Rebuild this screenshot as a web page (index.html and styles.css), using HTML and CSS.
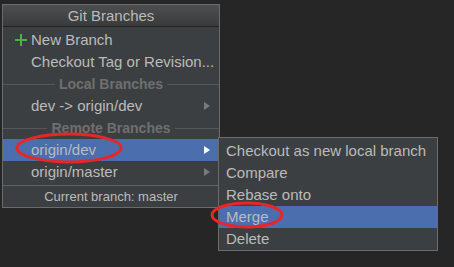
FILE: index.html
```html
<!DOCTYPE html>
<html><head>
<title>Git Branches</title>
<link rel="stylesheet" href="styles.css">
</head><body>

<div class="popup branches">
  <div class="title">Git Branches</div>
  <div class="item"><span class="icon plus"></span>New Branch</div>
  <div class="item">Checkout Tag or Revision...</div>
  <div class="sep"><span>Local Branches</span></div>
  <div class="item sub">dev -&gt; origin/dev</div>
  <div class="sep"><span>Remote Branches</span></div>
  <div class="item sub selected">origin/dev</div>
  <div class="item sub">origin/master</div>
  <div class="footer">Current branch: master</div>
</div>

<div class="popup actions">
  <div class="item">Checkout as new local branch</div>
  <div class="item">Compare</div>
  <div class="item">Rebase onto</div>
  <div class="item selected">Merge</div>
  <div class="item">Delete</div>
</div>

<!-- hand-drawn marks over the screenshot -->
<svg class="marks" width="454" height="267" viewBox="0 0 454 267">
  <ellipse cx="69" cy="148" rx="52" ry="14" />
  <ellipse cx="247" cy="215" rx="35" ry="12" />
</svg>

</body></html>
```

FILE: styles.css
```css
html, body {
  margin: 0;
  padding: 0;
  }
body {
  position: relative;
  width: 454px;
  height: 267px;
  background-color: #262626;
  font-family: "Liberation Sans", Arial, sans-serif;
  font-size: 15px;
  color: #bbbbbb;
  overflow: hidden;
  }
.popup {
  background-color: #3c3f41;
  border: 1px solid #6b6b6b;
  box-sizing: border-box;
  }
.branches {
  margin: 4px 0 0 2px;
  width: 218px;
  height: 204px;
  }
.actions {
  position: absolute;
  left: 218px;
  top: 137px;
  width: 220px;
  height: 114px;
  padding-top: 2px;
  }
.title {
  height: 21px;
  line-height: 21px;
  text-align: center;
  background: linear-gradient(#4c4e50, #3a3b3c);
  border-bottom: 1px solid #232323;
  margin-bottom: 2px;
  }
.item {
  position: relative;
  height: 22px;
  line-height: 22px;
  padding-left: 28px;
  white-space: nowrap;
  }
.actions .item {
  padding-left: 7px;
  }
.item.selected {
  background-color: #4b6eaf;
  }
.sub::after {
  content: "";
  position: absolute;
  right: 9px;
  top: 7px;
  border-style: solid;
  border-width: 4px 0 4px 6px;
  border-color: transparent transparent transparent #7a7a7a;
  }
.sub.selected::after {
  border-left-color: #ffffff;
  }
.icon.plus {
  position: absolute;
  left: 12px;
  top: 5px;
  width: 12px;
  height: 12px;
  background:
    linear-gradient(#49b246, #49b246) center / 12px 2px no-repeat,
    linear-gradient(#49b246, #49b246) center / 2px 12px no-repeat;
  }
.sep {
  display: flex;
  align-items: center;
  height: 22px;
  font-size: 14px;
  font-weight: bold;
  color: #6f6f6f;
  }
.sep::before, .sep::after {
  content: "";
  flex: 1;
  border-top: 1px solid #555759;
  }
.sep span {
  padding: 0 4px;
  }
.footer {
  margin-top: 2px;
  border-top: 1px solid #5e6062;
  height: 19px;
  line-height: 21px;
  text-align: center;
  font-size: 13px;
  }
.marks {
  position: absolute;
  left: 0;
  top: 0;
  pointer-events: none;
  }
.marks ellipse {
  fill: none;
  stroke: #e8262a;
  stroke-width: 3;
  }
```
